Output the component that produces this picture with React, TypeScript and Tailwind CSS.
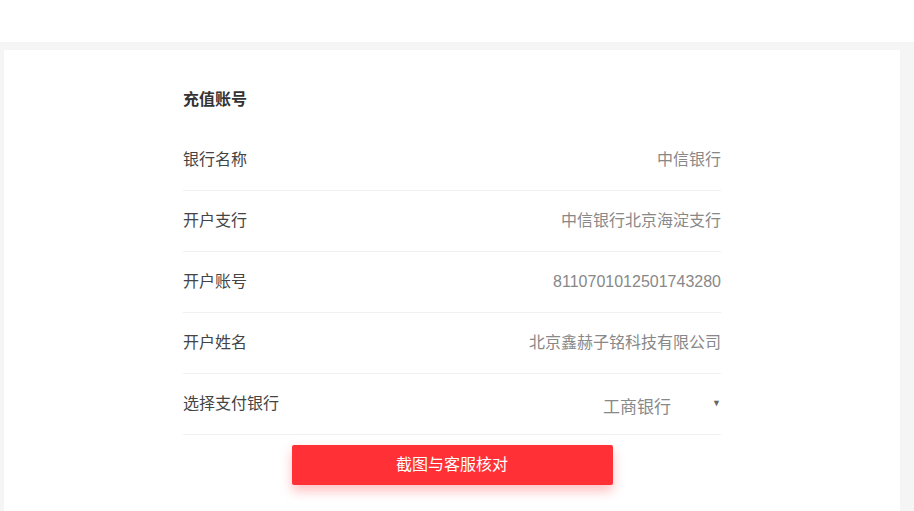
const rows = [
  { label: '银行名称', value: '中信银行' },
  { label: '开户支行', value: '中信银行北京海淀支行' },
  { label: '开户账号', value: '8110701012501743280' },
  { label: '开户姓名', value: '北京鑫赫子铭科技有限公司' },
];

export default function App() {
  return (
    <div
      className="min-h-[511px] w-[914px] bg-white"
      style={{ fontFamily: '"Liberation Sans", "Noto Sans CJK SC", sans-serif' }}
    >
      <div className="h-[42px] bg-white" />
      <div className="flex h-[469px] bg-[#f5f5f5] pt-[8px] pl-[4px] pr-[14px]">
        <div className="flex-1 bg-white pt-[38px]">
          <div className="mx-auto w-[538px]">
            <h2 className="text-[16px] font-bold leading-[24px] text-[#333]">充值账号</h2>
            <div className="mt-[18px]">
              {rows.map((r) => (
                <div
                  key={r.label}
                  className="flex h-[61px] items-center justify-between border-b border-[#f0f0f0] text-[16px]"
                >
                  <span className="text-[#444]">{r.label}</span>
                  <span className="text-[#888]">{r.value}</span>
                </div>
              ))}
              <div className="flex h-[61px] items-center justify-between border-b border-[#f0f0f0] text-[16px]">
                <span className="text-[#444]">选择支付银行</span>
                <div className="flex items-center">
                  <span className="mt-[8px] text-[17px] text-[#888]">工商银行</span>
                  <span className="ml-[41px] mr-0 text-[9px] text-[#666]">▼</span>
                </div>
              </div>
            </div>
            <div className="mt-[10px] flex justify-center">
              <button className="h-[40px] w-[321px] rounded-[2px] bg-[#ff3036] text-[16px] text-white shadow-[0_6px_12px_rgba(255,48,54,0.3)]">
                截图与客服核对
              </button>
            </div>
          </div>
        </div>
      </div>
    </div>
  );
}
